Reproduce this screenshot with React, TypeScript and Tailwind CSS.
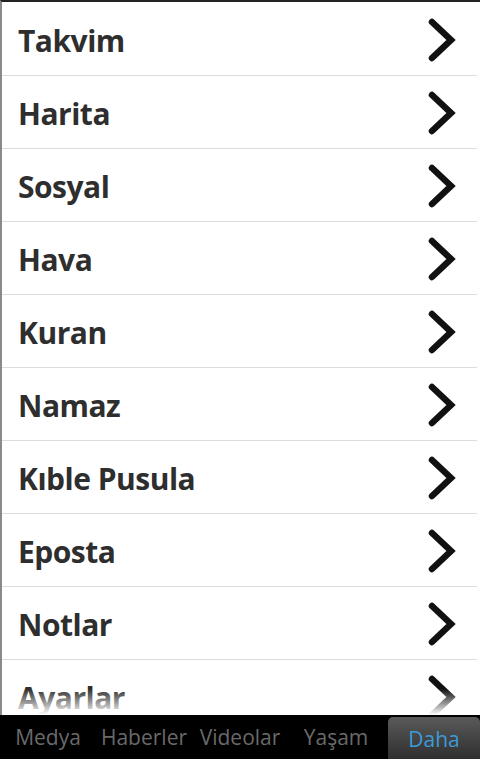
import React from 'react';

const items = ['Takvim', 'Harita', 'Sosyal', 'Hava', 'Kuran', 'Namaz', 'Kıble Pusula', 'Eposta', 'Notlar', 'Ayarlar'];
const tabs = ['Medya', 'Haberler', 'Videolar', 'Yaşam', 'Daha'];

function Chevron() {
    return (
        <svg width="30" height="44" viewBox="0 0 30 44" className="shrink-0">
            <path d="M5 4 L24 22 L5 40" fill="none" stroke="#111" strokeWidth="6.5" strokeLinecap="round" strokeLinejoin="miter" />
        </svg>
    );
}

export default function App() {
    return (
        <div className="w-[480px] h-[759px] flex flex-col bg-white overflow-hidden" style={{ fontFamily: '"Open Sans", "DejaVu Sans", sans-serif' }}>
            {/* list */}
            <div className="relative flex-1 overflow-hidden border-t-2 border-t-[#222] border-l-2 border-l-[#8a8a8a] pt-[1px]">
                {items.map((name) => (
                    <div key={name} className="h-[73px] shrink-0 flex items-center justify-between pl-[16px] pr-[20px] border-b border-[#dcdcdc] mr-[3px] pt-[2px]">
                        <span className="text-[30px] font-bold text-[#2e2e2e] tracking-[-0.5px]">{name}</span>
                        <Chevron />
                    </div>
                ))}
                {/* fade at the bottom */}
                <div className="absolute left-0 right-0 bottom-0 h-[26px] bg-gradient-to-b from-white/0 to-white" />
            </div>

            {/* tab bar */}
            <div className="h-[44px] shrink-0 bg-black grid grid-cols-5">
                {tabs.map((t) => (
                    <div key={t} className="flex items-end justify-center pb-[6px]">
                        {t === 'Daha' ? (
                            <div className="w-[92px] self-end ml-[4px] h-[42px] rounded-t-[5px] bg-gradient-to-b from-[#5a5a5a] to-[#2f2f2f] flex items-end justify-center pb-[4px] mb-[-6px]">
                                <span className="text-[21px] text-[#3d9ad8]">{t}</span>
                            </div>
                        ) : (
                            <span className="text-[21px] text-[#6a6a6a]">{t}</span>
                        )}
                    </div>
                ))}
            </div>
        </div>
    );
}
